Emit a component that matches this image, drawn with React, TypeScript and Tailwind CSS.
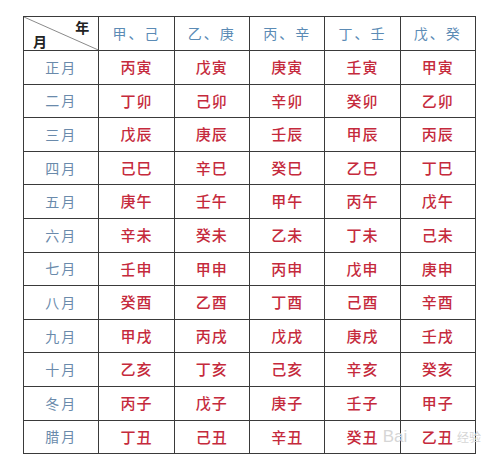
import React from 'react';

const STEMS = ['甲、己', '乙、庚', '丙、辛', '丁、壬', '戊、癸'];

const ROWS: { month: string; values: string[] }[] = [
  { month: '正月', values: ['丙寅', '戊寅', '庚寅', '壬寅', '甲寅'] },
  { month: '二月', values: ['丁卯', '己卯', '辛卯', '癸卯', '乙卯'] },
  { month: '三月', values: ['戊辰', '庚辰', '壬辰', '甲辰', '丙辰'] },
  { month: '四月', values: ['己巳', '辛巳', '癸巳', '乙巳', '丁巳'] },
  { month: '五月', values: ['庚午', '壬午', '甲午', '丙午', '戊午'] },
  { month: '六月', values: ['辛未', '癸未', '乙未', '丁未', '己未'] },
  { month: '七月', values: ['壬申', '甲申', '丙申', '戊申', '庚申'] },
  { month: '八月', values: ['癸酉', '乙酉', '丁酉', '己酉', '辛酉'] },
  { month: '九月', values: ['甲戌', '丙戌', '戊戌', '庚戌', '壬戌'] },
  { month: '十月', values: ['乙亥', '丁亥', '己亥', '辛亥', '癸亥'] },
  { month: '冬月', values: ['丙子', '戊子', '庚子', '壬子', '甲子'] },
  { month: '腊月', values: ['丁丑', '己丑', '辛丑', '癸丑', '乙丑'] },
];

const font = "font-['Noto_Sans_CJK_SC',sans-serif]";
const cell = 'flex items-center justify-center border-r border-b border-[#3a3a3a]';

const App: React.FC = () => {
  return (
    <div className={`w-[500px] h-[471px] bg-white pt-[16px] pl-[23px] ${font}`}>
      <div className="grid grid-cols-6 grid-rows-[34px_repeat(12,33.6px)] w-[453px] border-l border-t border-[#3a3a3a]">
        {/* Corner cell with diagonal */}
        <div className="relative flex flex-col justify-between px-[9px] pt-[3px] pb-[3px] border-r border-b border-[#3a3a3a]">
          <svg className="absolute inset-0" width="100%" height="100%" preserveAspectRatio="none" viewBox="0 0 100 100">
            <line x1="0" y1="0" x2="100" y2="100" stroke="#8a8a8a" strokeWidth="1" vectorEffect="non-scaling-stroke" />
          </svg>
          <span className="self-end text-[14px] font-bold text-[#222] leading-none">年</span>
          <span className="self-start text-[14px] font-bold text-[#222] leading-none">月</span>
        </div>
        {STEMS.map((s) => (
          <div key={s} className={`${cell} text-[14px] tracking-[2px] text-[#5b8bb5]`}>
            {s}
          </div>
        ))}

        {ROWS.map((row, r) => (
          <React.Fragment key={row.month}>
            <div className={`${cell} text-[14px] tracking-[2px] text-[#6a8aab]`}>{row.month}</div>
            {row.values.map((v, i) => {
              const last = r === ROWS.length - 1 && i === row.values.length - 1;
              return (
                <div
                  key={i}
                  className={`${cell} relative text-[15px] font-medium tracking-[1px] text-[#c52a3c]`}
                >
                  {v}
                  {last && (
                    // faint watermark lying over the last cell
                    <div className="absolute inset-y-0 -left-[18px] -right-[6px] flex items-center justify-between pointer-events-none">
                      <span className="font-['Liberation_Sans',sans-serif] text-[17px] tracking-normal font-normal text-[#d6d6d6]">
                        Bai
                      </span>
                      <span className="text-[12px] tracking-normal font-normal text-[#d6d6d6]">
                        经验
                      </span>
                    </div>
                  )}
                </div>
              );
            })}
          </React.Fragment>
        ))}
      </div>
    </div>
  );
};

export default App;
